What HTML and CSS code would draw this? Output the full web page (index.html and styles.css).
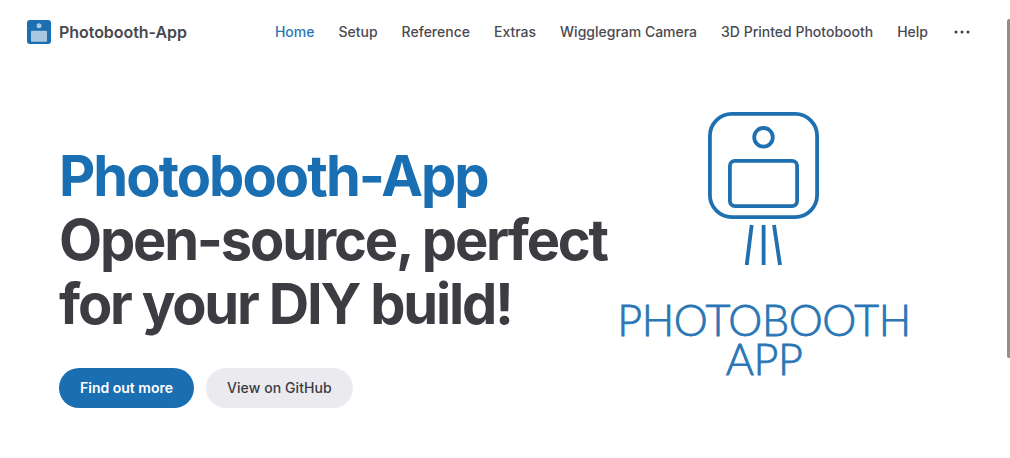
FILE: index.html
```html
<html>
  <head>
    <title>Photobooth-App</title>
    <link rel="stylesheet" href="styles.css">
  </head>
  <body>
    <header class="nav">
      <a class="brand" href="#">
        <svg class="brand-logo" viewBox="0 0 24 24">
          <rect width="24" height="24" rx="3" fill="#1a6eb2" />
          <circle cx="12" cy="5.8" r="2.5" fill="#a8c8e2" />
          <rect x="4" y="10.7" width="16" height="11" rx="0.8" fill="#a8c8e2" />
        </svg>
        <span>Photobooth-App</span>
      </a>
      <nav class="nav-links">
        <a class="active" href="#">Home</a>
        <a href="#">Setup</a>
        <a href="#">Reference</a>
        <a href="#">Extras</a>
        <a href="#">Wigglegram Camera</a>
        <a href="#">3D Printed Photobooth</a>
        <a href="#">Help</a>
      </nav>
      <button class="more" aria-label="more">
        <svg viewBox="0 0 16 4" width="16" height="4">
          <circle cx="2" cy="2" r="1.5" />
          <circle cx="8" cy="2" r="1.5" />
          <circle cx="14" cy="2" r="1.5" />
        </svg>
      </button>
    </header>
    <main class="hero">
      <div class="hero-text">
        <h1><span class="name">Photobooth-App</span><br>Open-source, perfect for your DIY build!</h1>
        <div class="actions">
          <a class="btn btn-brand" href="#">Find out more</a>
          <a class="btn btn-alt" href="#">View on GitHub</a>
        </div>
      </div>
      <div class="hero-image">
        <svg class="booth" viewBox="0 0 112 156">
          <rect x="1.9" y="1.9" width="107.2" height="103.2" rx="22" />
          <circle cx="55.5" cy="25.3" r="9.3" />
          <rect x="21.9" y="48.9" width="67.2" height="45.2" rx="5" />
          <path d="M43.7 113 L38.7 153 M55.6 113 L55.6 153 M66 113 L72 153" />
        </svg>
        <div class="logo-text">PHOTOBOOTH<br>APP</div>
      </div>
    </main>
    <div class="scrollbar"></div>
  </body>
</html>
```

FILE: styles.css
```css
html, body {
  height: 100%;
  overflow: hidden;
}
body {
  margin: 0;
  background: #fff;
  color: #3c3c43;
  font-family: Inter, sans-serif;
}
a {
  color: inherit;
  text-decoration: none;
}
.nav {
  display: flex;
  align-items: center;
  height: 64px;
  padding: 0 40px 0 27px;
  box-sizing: border-box;
}
.brand {
  display: flex;
  align-items: center;
  gap: 8px;
  font-size: 16px;
  font-weight: 600;
  letter-spacing: -0.05px;
  color: #48484f;
}
.brand-logo {
  width: 24px;
  height: 24px;
}
.nav-links {
  display: flex;
  gap: 24px;
  margin-left: auto;
  font-size: 14px;
  font-weight: 500;
  line-height: 64px;
  color: #4a4a51;
}
.nav-links .active {
  color: #2a77b5;
}
.more {
  display: flex;
  padding: 0;
  margin-left: 26px;
  border: 0;
  background: none;
}
.more svg {
  fill: #3c3c43;
}
.hero {
  display: flex;
  justify-content: space-between;
  padding: 48px 100px 0 59px;
}
.hero-text {
  width: 560px;
  padding-top: 32px;
}
h1 {
  margin: 0;
  font-size: 56px;
  line-height: 64px;
  font-weight: 700;
  letter-spacing: -2.2px;
  color: #3c3c43;
}
.name {
  letter-spacing: -1.95px;
  color: #1a6eb2;
}
.actions {
  display: flex;
  gap: 12px;
  margin-top: 32px;
}
.btn {
  padding: 0 21px;
  font-size: 14px;
  line-height: 40px;
  border-radius: 20px;
}
.btn-brand {
  background: #1a6eb2;
  color: #fff;
  font-weight: 600;
}
.btn-alt {
  background: #ebebef;
  font-weight: 500;
  letter-spacing: 0.08px;
}
.hero-image {
  display: flex;
  flex-direction: column;
  align-items: center;
  width: 292px;
}
.booth {
  width: 112px;
  height: 156px;
  fill: none;
  stroke: #1f70b0;
  stroke-width: 3.8;
}
.logo-text {
  margin-top: 32px;
  font-family: "Lato", sans-serif;
  font-weight: 300;
  font-size: 43px;
  line-height: 39px;
  letter-spacing: -0.4px;
  text-align: center;
  color: #2a76b4;
  -webkit-text-stroke: 0.8px #2a76b4;
}
.scrollbar {
  position: absolute;
  top: 19px;
  right: 0;
  width: 3px;
  height: 339px;
  background: #8f8f8f;
  border-radius: 2px 0 0 2px;
}
```
